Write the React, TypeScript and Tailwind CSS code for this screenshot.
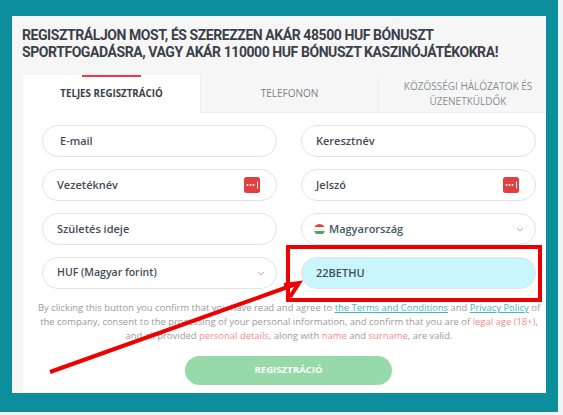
import React from "react";

const font = { fontFamily: '"Open Sans", sans-serif' };

function Chevron() {
  return (
    <svg width="8" height="5" viewBox="0 0 8 5" className="mr-[11px]">
      <path d="M1 1l3 3 3-3" fill="none" stroke="#f39a9a" strokeWidth="1" />
    </svg>
  );
}

function KeyIcon() {
  return (
    <svg width="16" height="16" viewBox="0 0 16 16" className="mr-[16px]">
      <rect width="16" height="16" rx="2.5" fill="#e0403f" />
      <circle cx="3.5" cy="8" r="1" fill="#fff" />
      <circle cx="6.5" cy="8" r="1" fill="#fff" />
      <circle cx="9.5" cy="8" r="1" fill="#fff" />
      <rect x="13" y="4.5" width="1" height="7" fill="#fff" />
    </svg>
  );
}

function Field({ children, right, className = "" }: { children: React.ReactNode; right?: React.ReactNode; className?: string }) {
  return (
    <div className={`flex h-[32px] items-center justify-between rounded-full border border-[#e2e3e5] pl-[14px] ${className}`}>
      <div className="flex items-center text-[11px] font-semibold text-[#454c58]">{children}</div>
      {right}
    </div>
  );
}

export default function App() {
  return (
    <div className="relative h-[415px] w-[563px] overflow-hidden bg-[#eef6f7]" style={font}>
      <div className="h-[412px] w-[558px] bg-[#0d8e9c] pl-[12px] pt-[16px]">
        <div className="h-[377px] w-[534px] bg-[#f6f6f7] pt-[11px]">
          <div
            className="ml-[10px] whitespace-nowrap text-[14px] font-bold uppercase leading-[16.5px] tracking-[-0.43px] text-[#3b3f4a]"
            style={{ fontFamily: "Roboto, sans-serif" }}
          >
            <div>Regisztráljon most, és szerezzen akár 48500 HUF bónuszt</div>
            <div>sportfogadásra, vagy akár 110000 HUF bónuszt kaszinójátékokra!</div>
          </div>

          <div className="ml-[11px] mt-[15px] flex h-[318px] flex-col bg-white">
            <div className="flex h-[38px] shrink-0 text-center uppercase">
              <div className="relative flex w-[177px] items-center justify-center bg-white text-[9.75px] font-bold text-[#3b3f4a]">
                <span className="absolute left-[59px] top-0 h-[1.5px] w-[59px] bg-[#ef3b3b]" />
                Teljes regisztráció
              </div>
              <div className="flex w-[178px] items-center justify-center border-b border-l border-[#eeeeef] bg-[#f6f6f7] text-[10px] text-[#7c8087]">
                Telefonon
              </div>
              <div className="flex w-[168px] items-center justify-center border-b border-l border-[#eeeeef] bg-[#f6f6f7] pl-[11px] text-[10px] leading-[14.5px] text-[#8a8d93]">
                <span>
                  Közösségi hálózatok és
                  <br />
                  üzenetküldők
                </span>
              </div>
            </div>

            <div className="ml-[19px] mt-[12px] grid w-[494px] grid-cols-[235px_235px] gap-x-[24px] gap-y-[12px]">
              <Field>
                <span className="ml-[3px]">E-mail</span>
              </Field>
              <Field>Keresztnév</Field>
              <Field right={<KeyIcon />}>Vezetéknév</Field>
              <Field right={<KeyIcon />}>Jelszó</Field>
              <Field>Születés ideje</Field>
              <Field right={<Chevron />}>
                <span className="-ml-[2px] mr-[4px] flex h-[11px] w-[11px] flex-col overflow-hidden rounded-full">
                  <span className="h-1/3 bg-[#d8433f]" />
                  <span className="h-1/3 bg-[#f3f3f3]" />
                  <span className="h-1/3 bg-[#5aa55a]" />
                </span>
                <span className="text-[#3f5866]">Magyarország</span>
              </Field>
              <Field right={<Chevron />}>
                <span className="text-[10.5px]">HUF (Magyar forint)</span>
              </Field>
              <Field className="bg-[#c8f6fb]">22BETHU</Field>
            </div>

            <p className="ml-[10px] mt-[12px] w-[512px] text-center text-[9.45px] leading-[14px] text-[#9a9a9a]">
              By clicking this button you confirm that you have read and agree to{" "}
              <span className="text-[#43b6bf] underline">the Terms and Conditions</span> and{" "}
              <span className="text-[#43b6bf] underline">Privacy Policy</span> of the company, consent to the processing
              of your personal information, and confirm that you are of <span className="text-[#f58a8a]">legal age (18+)</span>,
              and all provided <span className="text-[#f58a8a]">personal details</span>, along with{" "}
              <span className="text-[#f58a8a]">name</span> and <span className="text-[#f58a8a]">surname</span>, are valid.
            </p>

            <div className="ml-[162px] mt-[13px] flex h-[29px] w-[207px] items-center justify-center rounded-full bg-[#97d9a9] text-[9.6px] font-bold uppercase text-white">
              Regisztráció
            </div>
          </div>
        </div>
      </div>

      <div className="absolute left-[286px] top-[245px] h-[57px] w-[256px] border-[4px] border-[#ee0000]" />
      <svg className="absolute left-0 top-0" width="563" height="415" viewBox="0 0 563 415">
        <path d="M50 372L296 284" stroke="#ee0000" strokeWidth="4" fill="none" />
        <path d="M284 285L299 283L290 297" stroke="#ee0000" strokeWidth="4" fill="none" />
      </svg>
    </div>
  );
}
